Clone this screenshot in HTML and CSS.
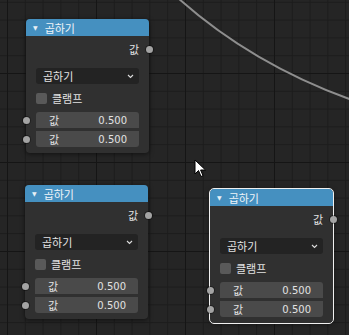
FILE: index.html
```html
<!DOCTYPE html>
<html>
<head>
    <link rel="stylesheet" href="styles.css">
</head>
<body>
    <div class="editor">
        <svg class="link" width="349" height="335" viewBox="0 0 349 335">
            <path d="M178 -2 C225 40, 285 76, 352 100" fill="none" stroke="#8e8e8e" stroke-width="2"/>
        </svg>

        <div class="node node-a">
            <div class="node-header"><span class="arrow">▼</span>곱하기</div>
            <div class="node-body">
                <div class="out-row">값<span class="socket socket-out"></span></div>
                <div class="dropdown">곱하기
                    <svg class="chevron" width="7" height="5" viewBox="0 0 7 5"><path d="M1 1 L3.5 3.5 L6 1" fill="none" stroke="#ddd" stroke-width="1.1"/></svg>
                </div>
                <div class="check-row"><span class="checkbox"></span>클램프</div>
                <div class="fields">
                    <div class="field first"><span class="socket socket-in"></span><span>값</span><span class="num">0.500</span></div>
                    <div class="field last"><span class="socket socket-in"></span><span>값</span><span class="num">0.500</span></div>
                </div>
            </div>
        </div>

        <div class="node node-b">
            <div class="node-header"><span class="arrow">▼</span>곱하기</div>
            <div class="node-body">
                <div class="out-row">값<span class="socket socket-out"></span></div>
                <div class="dropdown">곱하기
                    <svg class="chevron" width="7" height="5" viewBox="0 0 7 5"><path d="M1 1 L3.5 3.5 L6 1" fill="none" stroke="#ddd" stroke-width="1.1"/></svg>
                </div>
                <div class="check-row"><span class="checkbox"></span>클램프</div>
                <div class="fields">
                    <div class="field first"><span class="socket socket-in"></span><span>값</span><span class="num">0.500</span></div>
                    <div class="field last"><span class="socket socket-in"></span><span>값</span><span class="num">0.500</span></div>
                </div>
            </div>
        </div>

        <div class="node node-c selected">
            <div class="node-header"><span class="arrow">▼</span>곱하기</div>
            <div class="node-body">
                <div class="out-row">값<span class="socket socket-out"></span></div>
                <div class="dropdown">곱하기
                    <svg class="chevron" width="7" height="5" viewBox="0 0 7 5"><path d="M1 1 L3.5 3.5 L6 1" fill="none" stroke="#ddd" stroke-width="1.1"/></svg>
                </div>
                <div class="check-row"><span class="checkbox"></span>클램프</div>
                <div class="fields">
                    <div class="field first"><span class="socket socket-in"></span><span>값</span><span class="num">0.500</span></div>
                    <div class="field last"><span class="socket socket-in"></span><span>값</span><span class="num">0.500</span></div>
                </div>
            </div>
        </div>

        <svg class="cursor" width="14" height="20" viewBox="0 0 14 20">
            <path d="M1 1 L1 15 L4.5 11.5 L7 17.5 L9 16.6 L6.6 11 L11.5 11 Z" fill="#fff" stroke="#000" stroke-width="1"/>
        </svg>
    </div>
</body>
</html>
```

FILE: styles.css
```css
body {
    margin: 0;
    background: #252525;
}
.editor {
    position: relative;
    width: 349px;
    height: 335px;
    overflow: hidden;
    font-family: "DejaVu Sans", "Noto Sans CJK KR", sans-serif;
    font-size: 11px;
    color: #e2e2e2;
    background-color: #252525;
    background-image:
        linear-gradient(#151515 1px, transparent 1px),
        linear-gradient(90deg, #151515 1px, transparent 1px),
        linear-gradient(#1c1c1c 1px, transparent 1px),
        linear-gradient(90deg, #1c1c1c 1px, transparent 1px);
    background-size: 100% 89px, 89px 100%, 100% 17.8px, 17.8px 100%;
    background-position: 0 73px, 7px 0, 0 1.8px, 7px 0;
}
.link {
    position: absolute;
    left: 0;
    top: 0;
}
.cursor {
    position: absolute;
    left: 194px;
    top: 159px;
}
.node {
    position: absolute;
    width: 123px;
    border-radius: 4px;
    background: #303030;
    box-shadow: 0 1px 5px rgba(0, 0, 0, 0.55);
}
.node-a {
    left: 26px;
    top: 19px;
}
.node-b {
    left: 25px;
    top: 185px;
}
.node-c {
    left: 210px;
    top: 189px;
}
.selected {
    outline: 1px solid #f0f0f0;
}
.node-header {
    height: 17px;
    display: flex;
    align-items: center;
    padding-left: 7px;
    background: #4590c0;
    border-radius: 4px 4px 0 0;
    color: #eef4f8;
}
.arrow {
    font-size: 6px;
    margin-right: 7px;
    color: #e8f0f6;
}
.node-body {
    display: flex;
    flex-direction: column;
    padding: 5px 10px 6px 10px;
}
.out-row {
    position: relative;
    height: 16px;
    display: flex;
    align-items: center;
    justify-content: flex-end;
}
.socket {
    position: absolute;
    width: 7px;
    height: 7px;
    border-radius: 50%;
    background: #a3a3a3;
    box-shadow: 0 0 0 1px rgba(0, 0, 0, 0.35);
}
.socket-out {
    right: -13.5px;
    top: 4.5px;
}
.socket-in {
    left: -13.5px;
    top: 4.5px;
}
.dropdown {
    margin-top: 11px;
    height: 16px;
    display: flex;
    align-items: center;
    justify-content: space-between;
    padding: 0 5px 0 7px;
    background: #232323;
    border-radius: 3px;
}
.check-row {
    margin-top: 6px;
    height: 16px;
    display: flex;
    align-items: center;
    gap: 5px;
}
.checkbox {
    width: 11px;
    height: 11px;
    border-radius: 2px;
    background: #595959;
}
.fields {
    margin-top: 6px;
    display: flex;
    flex-direction: column;
    gap: 3px;
}
.field {
    position: relative;
    height: 16px;
    display: flex;
    align-items: center;
    justify-content: space-between;
    padding: 0 12px 0 13px;
    background: #4a4a4a;
}
.field.first {
    border-radius: 3px 3px 0 0;
}
.field.last {
    border-radius: 0 0 3px 3px;
}
.num {
    font-size: 10px;
}
```
